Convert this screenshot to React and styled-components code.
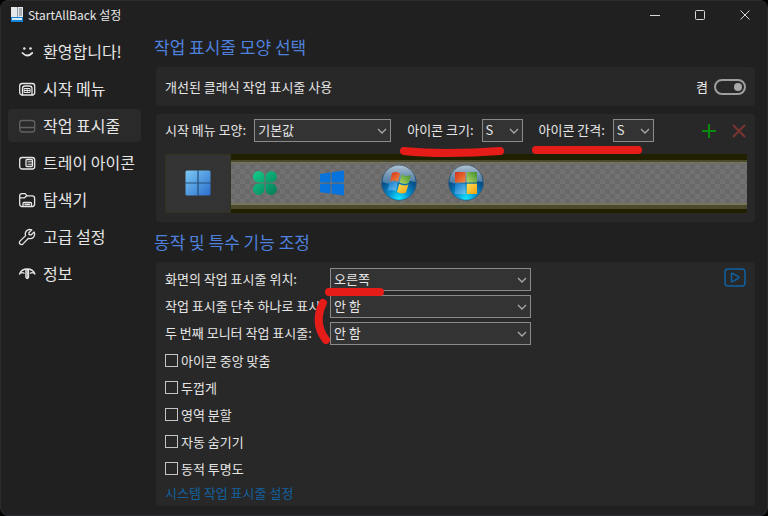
import React, {useState} from 'react';
import styled, {createGlobalStyle} from 'styled-components';


const SmileIcon = () => (
    <Icon viewBox="0 0 18 18">
        <circle cx="6.300" cy="5.500" r="1.300" fill="currentColor" stroke="none"/>
        <circle cx="12.500" cy="5.500" r="1.300" fill="currentColor" stroke="none"/>
        <path d="M4.500 10Q9.300 15 14.200 10" strokeWidth="1.800"/>
    </Icon>
)

const StartMenuIcon = () => (
    <Icon viewBox="0 0 18 18">
        <rect x="1.700" y="3.500" width="15" height="11.500" rx="2.500"/>
        <path d="M4.500 15V8.500Q4.500 6 7 6H11.500Q14 6 14 8.500V15"/>
        <path d="M6.500 8.500H12V12.500H6.500ZM9.200 8.500V12.500M6.500 10.500H12" strokeWidth="1"/>
    </Icon>
)

const TaskbarIcon = () => (
    <Icon viewBox="0 0 18 18" color="#626262">
        <rect x="1.700" y="3.500" width="15" height="11.500" rx="2.500"/>
        <path d="M2 10.500H16.500"/>
    </Icon>
)

const TrayIcon = () => (
    <Icon viewBox="0 0 18 18">
        <rect x="1.700" y="3.500" width="15" height="11.500" rx="2.500"/>
        <rect x="8" y="5.500" width="6.500" height="7" rx="1"/>
        <path d="M10 7.800H14M10 10.200H14" strokeWidth="1"/>
    </Icon>
)

const FolderIcon = () => (
    <Icon viewBox="0 0 18 18">
        <path d="M4 15.500Q1.700 15.500 1.700 13V5Q1.700 2.700 4 2.700H7.200L9 4.800H14.200Q16.600 4.800 16.600 7.200V13Q16.600 15.500 14.300 15.500Z"/>
        <path d="M2 6.800H6.500L8.500 5M5 15V12.500Q5 11.500 6 11.500H12.500Q13.500 11.500 13.500 12.500V15M7 13.500H11.500"/>
    </Icon>
)

const WrenchIcon = () => (
    <Icon viewBox="0 0 18 18">
        <path d="M13.800 1.900Q10.500 .7 8.400 3Q6.700 5 7.600 7.600L2 13.100Q.8 14.700 2 16Q3.500 17.200 5 15.900L10.500 10.300Q13.500 11.200 15.500 9.200Q17.400 7 16.100 4L13.300 6.800L11 6.500L10.900 4.700Z"/>
    </Icon>
)

const InfoIcon = () => (
    <Icon viewBox="0 0 18 18">
        <path d="M1.500 9Q3.500 4 9.200 4Q15 4 16.900 9Q14.500 6.800 12.300 8.200M1.500 9Q4 6.800 6.100 8.200"/>
        <path d="M7.900 4.500V12.500Q9.200 14.500 10.500 12.500V4.500"/>
        <path d="M9.200 4.500V13"/>
    </Icon>
)

const Win11Logo = () => (
    <Logo viewBox="0 0 36 36">
        <defs>
            <linearGradient id="win11" x1="0" y1="0" x2="1" y2="1">
                <stop offset="0" stopColor="#7cc9f5"/>
                <stop offset="1" stopColor="#2a6dcb"/>
            </linearGradient>
        </defs>
        <rect x="5.500" y="5.500" width="25" height="25" rx="1.500" fill="url(#win11)"/>
        <path d="M18 5V31M5 18H31" stroke="#264d78" strokeWidth="1.200"/>
    </Logo>
)

const CloverLogo = () => (
    <Logo viewBox="0 0 36 36">
        <defs>
            <linearGradient id="clover" x1="0" y1="0" x2="1" y2="1">
                <stop offset="0" stopColor="#12cf88"/>
                <stop offset="1" stopColor="#047a58"/>
            </linearGradient>
        </defs>
        <path
            fill="url(#clover)"
            d="M17.400 17.400H11.500A5.700 5.700 0 1 1 17.400 11.500ZM18.600 17.400V11.500A5.700 5.700 0 1 1 24.500 17.400ZM17.400 18.600V24.500A5.700 5.700 0 1 1 11.500 18.600ZM18.600 18.600H24.500A5.700 5.700 0 1 1 18.600 24.500Z"
        />
    </Logo>
)

const Win10Logo = () => (
    <Logo viewBox="0 0 36 36">
        <path fill="#0873dc" d="M6 9L16.500 7.500V17.500H6ZM17.700 7.300L30 5.500V17.500H17.700ZM6 18.700H16.500V28.500L6 27.200ZM17.700 18.700H30V30.500L17.700 28.700Z"/>
    </Logo>
)

const Orb = ({id, flat}) => (
    <Logo viewBox="0 0 36 36">
        <defs>
            <radialGradient id={id} cx=".5" cy=".95" r=".85">
                <stop offset="0" stopColor="#14e6ff"/>
                <stop offset=".35" stopColor="#0790cf"/>
                <stop offset=".7" stopColor="#07528c"/>
                <stop offset="1" stopColor="#0a3a66"/>
            </radialGradient>
            <linearGradient id={id + 'shine'} x1="0" y1="0" x2="0" y2="1">
                <stop offset="0" stopColor="#c3d2df" stopOpacity=".9"/>
                <stop offset="1" stopColor="#7fa0bd" stopOpacity=".55"/>
            </linearGradient>
            <linearGradient id={id + 'r'} x1="0" y1="0" x2="1" y2="1">
                <stop offset="0" stopColor="#d5301a"/><stop offset="1" stopColor="#f08a3c"/>
            </linearGradient>
            <linearGradient id={id + 'g'} x1="0" y1="1" x2="1" y2="0">
                <stop offset="0" stopColor="#b5d766"/><stop offset="1" stopColor="#3d8d2d"/>
            </linearGradient>
            <linearGradient id={id + 'b'} x1="0" y1="0" x2="1" y2="1">
                <stop offset="0" stopColor="#1277c8"/><stop offset="1" stopColor="#6cc4f2"/>
            </linearGradient>
            <linearGradient id={id + 'y'} x1="0" y1="0" x2="1" y2="1">
                <stop offset="0" stopColor="#ffdf55"/><stop offset="1" stopColor="#f0a010"/>
            </linearGradient>
        </defs>
        <circle cx="18" cy="18" r="17.300" fill={`url(#${id})`} stroke="#2c5878" strokeWidth=".8"/>
        <path d="M1.500 17A16.500 16.500 0 0 1 34.500 17Q26 15 18 17.500Q9 20 1.500 17Z" fill={`url(#${id}shine)`}/>
        {flat ? (
            <g>
                <path d="M7 7H17.500V17.500H7Z" fill={`url(#${id}r)`}/>
                <path d="M18.700 7H29V17.500H18.700Z" fill={`url(#${id}g)`}/>
                <path d="M7 18.700H17.500V29H7Z" fill={`url(#${id}b)`}/>
                <path d="M18.700 18.700H29V29H18.700Z" fill={`url(#${id}y)`}/>
            </g>
        ) : (
            <g>
                <path d="M11 8Q15 6 19 8.500L17 16.500Q13 14.500 9 16.500Z" fill={`url(#${id}r)`}/>
                <path d="M20.500 9.500Q25 12 30 10L27.700 18Q23 20 18.500 17.500Z" fill={`url(#${id}g)`}/>
                <path d="M8.500 18Q12.500 16 16.700 18.200L14.700 26Q11 24 6.500 26Z" fill={`url(#${id}b)`}/>
                <path d="M18.200 19Q23 21.500 27.400 19.500L25 27.500Q20.500 29.500 16 27Z" fill={`url(#${id}y)`}/>
            </g>
        )}
    </Logo>
)

const navItems = [
    {name: '환영합니다!', icon: <SmileIcon/>},
    {name: '시작 메뉴', icon: <StartMenuIcon/>},
    {name: '작업 표시줄', icon: <TaskbarIcon/>},
    {name: '트레이 아이콘', icon: <TrayIcon/>},
    {name: '탐색기', icon: <FolderIcon/>},
    {name: '고급 설정', icon: <WrenchIcon/>},
    {name: '정보', icon: <InfoIcon/>},
]

const startButtons = [
    {name: 'Windows 11', logo: <Win11Logo/>},
    {name: 'Clover', logo: <CloverLogo/>},
    {name: 'Windows 10', logo: <Win10Logo/>},
    {name: 'Windows 7', logo: <Orb id="orb7"/>},
    {name: 'Windows 8', logo: <Orb id="orb8" flat/>},
]

const checks = ['아이콘 중앙 맞춤', '두껍게', '영역 분할', '자동 숨기기', '동적 투명도']

const Select = ({id, options, width}) => (
    <SelectBox $width={width}>
        <NativeSelect id={id}>
            {options.map(o => <option key={o}>{o}</option>)}
        </NativeSelect>
        <Chevron viewBox="0 0 10 10"><path d="M1 3L5 7L9 3"/></Chevron>
    </SelectBox>
)

const App = () => {
    const [page, setPage] = useState('작업 표시줄')
    const [logo, setLogo] = useState('Windows 11')

    return (
        <Window>
            <GlobalStyle/>
            <TitleBar>
                <AppIcon viewBox="0 0 12 16">
                    <rect width="12" height="12" fill="#e4e8ea"/>
                    <rect x="6" width="1" height="10" fill="#8d9aa3"/>
                    <path d="M8 2H11M8 4H11M8 6H11M8 8H11" stroke="#6f7b84"/>
                    <rect y="10" width="12" height="5" fill="#1583d6"/>
                    <rect x="1" y="11" width="10" height="2" fill="#d3ecfb"/>
                </AppIcon>
                <Title>StartAllBack 설정</Title>
                <WindowButton aria-label="최소화">
                    <Glyph viewBox="0 0 12 12"><path d="M1 6.500H11"/></Glyph>
                </WindowButton>
                <WindowButton aria-label="최대화">
                    <Glyph viewBox="0 0 12 12"><rect x="1.500" y="1.500" width="9" height="9" rx="1"/></Glyph>
                </WindowButton>
                <WindowButton aria-label="닫기">
                    <Glyph viewBox="0 0 12 12"><path d="M1.500 1.500L10.500 10.500M10.500 1.500L1.500 10.500"/></Glyph>
                </WindowButton>
            </TitleBar>
            <Body>
                <Nav>
                    {navItems.map(item => (
                        <NavButton
                            key={item.name}
                            $active={page === item.name}
                            onClick={() => setPage(item.name)}>
                            {item.icon}
                            <NavText>{item.name}</NavText>
                        </NavButton>
                    ))}
                </Nav>
                <Main>
                    <Heading>작업 표시줄 모양 선택</Heading>
                    <ToggleCard>
                        <span>개선된 클래식 작업 표시줄 사용</span>
                        <ToggleLabel>
                            켬
                            <Toggle type="checkbox" role="switch" defaultChecked/>
                        </ToggleLabel>
                    </ToggleCard>
                    <StyleCard>
                        <Toolbar>
                            <Field>
                                <Label htmlFor="look">시작 메뉴 모양:</Label>
                                <Select id="look" options={['기본값']} width={137}/>
                            </Field>
                            <Field>
                                <Label htmlFor="size">아이콘 크기:</Label>
                                <Select id="size" options={['S', 'M', 'L']} width={41}/>
                                <Underline viewBox="0 0 106 12">
                                    <path d="M5 5Q25 7 48 7Q75 7 101 5"/>
                                </Underline>
                            </Field>
                            <Field>
                                <Label htmlFor="gap">아이콘 간격:</Label>
                                <Select id="gap" options={['S', 'M', 'L']} width={41}/>
                                <Underline viewBox="0 0 112 12">
                                    <path d="M5 4H107"/>
                                </Underline>
                            </Field>
                            <Actions>
                                <ActionButton $color="#078a0d" aria-label="추가">
                                    <Action viewBox="0 0 14 14"><path d="M7 0V14M0 7H14"/></Action>
                                </ActionButton>
                                <ActionButton $color="#7a3531" aria-label="삭제">
                                    <Action viewBox="0 0 14 14"><path d="M1 1L13 13M13 1L1 13"/></Action>
                                </ActionButton>
                            </Actions>
                        </Toolbar>
                        <Preview>
                            {startButtons.map(b => (
                                <StartButton
                                    key={b.name}
                                    aria-label={b.name}
                                    $active={logo === b.name}
                                    onClick={() => setLogo(b.name)}>
                                    {b.logo}
                                </StartButton>
                            ))}
                        </Preview>
                    </StyleCard>
                    <Heading>동작 및 특수 기능 조정</Heading>
                    <OptionsCard>
                        <Options>
                            <OptionRow>
                                <Label htmlFor="position">화면의 작업 표시줄 위치:</Label>
                                <Select id="position" options={['오른쪽', '왼쪽', '위', '아래']} width={201}/>
                            </OptionRow>
                            <OptionRow>
                                <Label htmlFor="combine">작업 표시줄 단추 하나로 표시:</Label>
                                <Select id="combine" options={['안 함', '항상']} width={201}/>
                            </OptionRow>
                            <OptionRow>
                                <Label htmlFor="second">두 번째 모니터 작업 표시줄:</Label>
                                <Select id="second" options={['안 함', '항상']} width={201}/>
                            </OptionRow>
                            {checks.map(c => (
                                <CheckRow key={c}>
                                    <Check type="checkbox"/>
                                    {c}
                                </CheckRow>
                            ))}
                            <SystemLink href="#">시스템 작업 표시줄 설정</SystemLink>
                            <Marker viewBox="0 0 76 60">
                                <path d="M15 5H66M9 16Q-1 36 12 53"/>
                            </Marker>
                        </Options>
                        <PlayButton aria-label="재생">
                            <PlayIcon viewBox="0 0 22 20">
                                <rect x="1" y="1" width="20" height="17" rx="3"/>
                                <path d="M7.500 6Q7.500 4.800 8.600 5.400L14.500 8.600Q15.600 9.400 14.500 10.200L8.600 13.600Q7.500 14 7.500 12.900Z"/>
                            </PlayIcon>
                        </PlayButton>
                    </OptionsCard>
                </Main>
            </Body>
        </Window>
    )
}

const GlobalStyle = createGlobalStyle`
    * {
        box-sizing: border-box;
    }
    body {
        margin: 0;
        background: #000;
    }
    button, select, input {
        font: inherit;
        color: inherit;
        margin: 0;
    }
    button {
        border: 0;
        padding: 0;
        background: transparent;
    }
`;

const Window = styled.div`
    min-height: 100vh;
    display: flex;
    flex-direction: column;
    background: #202020;
    border: 1px solid #2a2e33;
    border-radius: 8px;
    color: #e6e6e6;
    font-family: "Noto Sans CJK KR", sans-serif;
    font-size: 13px;
    line-height: 18px;
`;

const TitleBar = styled.header`
    display: flex;
    align-items: center;
    height: 28px;
    padding-left: 10px;
`;

const AppIcon = styled.svg`
    width: 12px;
    height: 16px;
    margin-right: 5px;
`;

const Title = styled.span`
    flex: 1;
    font-size: 12px;
`;

const WindowButton = styled.button`
    display: grid;
    place-items: center;
    width: 45px;
    height: 28px;
`;

const Glyph = styled.svg`
    width: 12px;
    height: 12px;
    fill: none;
    stroke: #d8d8d8;
`;

const Body = styled.div`
    display: flex;
    flex: 1;
`;

const Nav = styled.nav`
    display: flex;
    flex-direction: column;
    gap: 4px;
    width: 140px;
    padding: 6px 0 0 7px;
`;

const NavButton = styled.button`
    display: flex;
    align-items: center;
    gap: 7px;
    height: 33px;
    padding-left: 10px;
    border-radius: 4px;
    background: ${p => p.$active ? '#2a2a2a' : 'transparent'};
    font-size: 16px;
    line-height: 24px;
    white-space: nowrap;
`;

const NavText = styled.span`
    padding-bottom: 2px;
`;

const Icon = styled.svg`
    width: 18px;
    height: 18px;
    fill: none;
    stroke: currentColor;
    stroke-width: 1.3px;
    stroke-linecap: round;
    stroke-linejoin: round;
`;

const Main = styled.main`
    flex: 1;
    min-width: 0;
    padding: 2px 12px 8px 13px;
`;

const Heading = styled.h2`
    display: flex;
    align-items: center;
    height: 32px;
    margin: 0 0 4px;
    color: #4f80dd;
    font-size: 17px;
    font-weight: 400;
`;

const Card = styled.section`
    margin-left: 2px;
    padding: 0 9px;
    border-radius: 4px;
    background: #282828;
`;

const ToggleCard = styled(Card)`
    display: flex;
    align-items: center;
    justify-content: space-between;
    height: 39px;
    margin-bottom: 8px;
`;

const ToggleLabel = styled.label`
    display: flex;
    align-items: center;
    gap: 6px;
`;

const Toggle = styled.input`
    appearance: none;
    display: flex;
    align-items: center;
    justify-content: flex-start;
    width: 32px;
    height: 16px;
    padding: 0 2px;
    border: 2px solid #9e9e9e;
    border-radius: 8px;

    &:checked {
        justify-content: flex-end;
    }
    &::before {
        content: '';
        width: 8px;
        height: 8px;
        border-radius: 4px;
        background: #a8a8a8;
    }
`;

const StyleCard = styled(Card)`
    padding: 5px 8px 9px 9px;
    margin-bottom: 4px;
`;

const Toolbar = styled.div`
    display: flex;
    align-items: center;
    gap: 16px;
    margin-bottom: 12px;
`;

const Field = styled.div`
    position: relative;
    display: flex;
    align-items: center;
    gap: 8px;
    white-space: nowrap;
`;

const Label = styled.label`
    padding-bottom: 2px;
`;

const SelectBox = styled.div`
    display: grid;
    align-items: center;
    width: ${p => p.$width}px;
    height: 23px;
    > * {
        grid-area: 1 / 1;
    }
`;

const NativeSelect = styled.select`
    appearance: none;
    width: 100%;
    height: 23px;
    padding: 0 16px 2px 3px;
    border: 1px solid #8a8a8a;
    border-radius: 0;
    background: #333;
    line-height: 18px;
`;

const Chevron = styled.svg`
    justify-self: end;
    width: 10px;
    height: 10px;
    margin-right: 4px;
    fill: none;
    stroke: #a8a8a8;
    stroke-width: 1.3px;
    pointer-events: none;
`;

/* red pen strokes drawn over the form */
const Pen = styled.svg`
    position: absolute;
    fill: none;
    stroke: #e61c19;
    stroke-width: 8px;
    stroke-linecap: round;
    pointer-events: none;
`;

const Underline = styled(Pen)`
    top: 27px;
    left: -8px;
    height: 12px;
`;

const Actions = styled.div`
    display: flex;
    gap: 16px;
    margin-left: auto;
    padding-right: 1px;
`;

const ActionButton = styled.button`
    display: grid;
    color: ${p => p.$color};
`;

const Action = styled.svg`
    width: 14px;
    height: 14px;
    stroke: currentColor;
    stroke-width: 2px;
`;

const Preview = styled.div`
    display: flex;
    gap: 1px;
    height: 59px;
    background:
        linear-gradient(#201f00 6px, #4b4a2e 6px, #4b4a2e 8px, #77765a 8px, #77765a 9px, transparent 9px, transparent 49px, #77765a 49px, #77765a 51px, #4b4a2e 51px, #4b4a2e 55px, #201f00 55px),
        repeating-conic-gradient(#696969 0% 25%, #727272 0% 50%) 0 0 / 10px 10px;
`;

const StartButton = styled.button`
    display: grid;
    place-items: center;
    width: 66px;
    padding-bottom: 2px;
    border: 1px solid ${p => p.$active ? '#33321c' : 'transparent'};
    background: ${p => p.$active ? '#333' : 'transparent'};
`;

const Logo = styled.svg`
    width: 36px;
    height: 36px;
`;

const OptionsCard = styled(Card)`
    display: flex;
    justify-content: space-between;
    align-items: flex-start;
    padding: 6px 9px 4px;
`;

const Options = styled.div`
    position: relative;
    display: flex;
    flex-direction: column;
    align-items: flex-start;
    gap: 4px;
`;

const OptionRow = styled.div`
    display: grid;
    grid-template-columns: 165px auto;
    align-items: center;
    height: 23px;
    white-space: nowrap;
`;

const CheckRow = styled.label`
    display: flex;
    align-items: center;
    gap: 3px;
    height: 23px;
`;

const Check = styled.input`
    appearance: none;
    width: 13px;
    height: 13px;
    border: 1px solid #c4c4c4;

    &:checked {
        background: #4f80dd;
    }
`;

const SystemLink = styled.a`
    color: #12619f;
    text-decoration: none;
`;

const Marker = styled(Pen)`
    top: 19px;
    left: 149px;
    width: 76px;
    height: 60px;
`;

const PlayButton = styled.button`
    display: grid;
`;

const PlayIcon = styled.svg`
    width: 22px;
    height: 20px;
    fill: none;
    stroke: #0f62a3;
    stroke-width: 1.5px;
`;


export default App;
